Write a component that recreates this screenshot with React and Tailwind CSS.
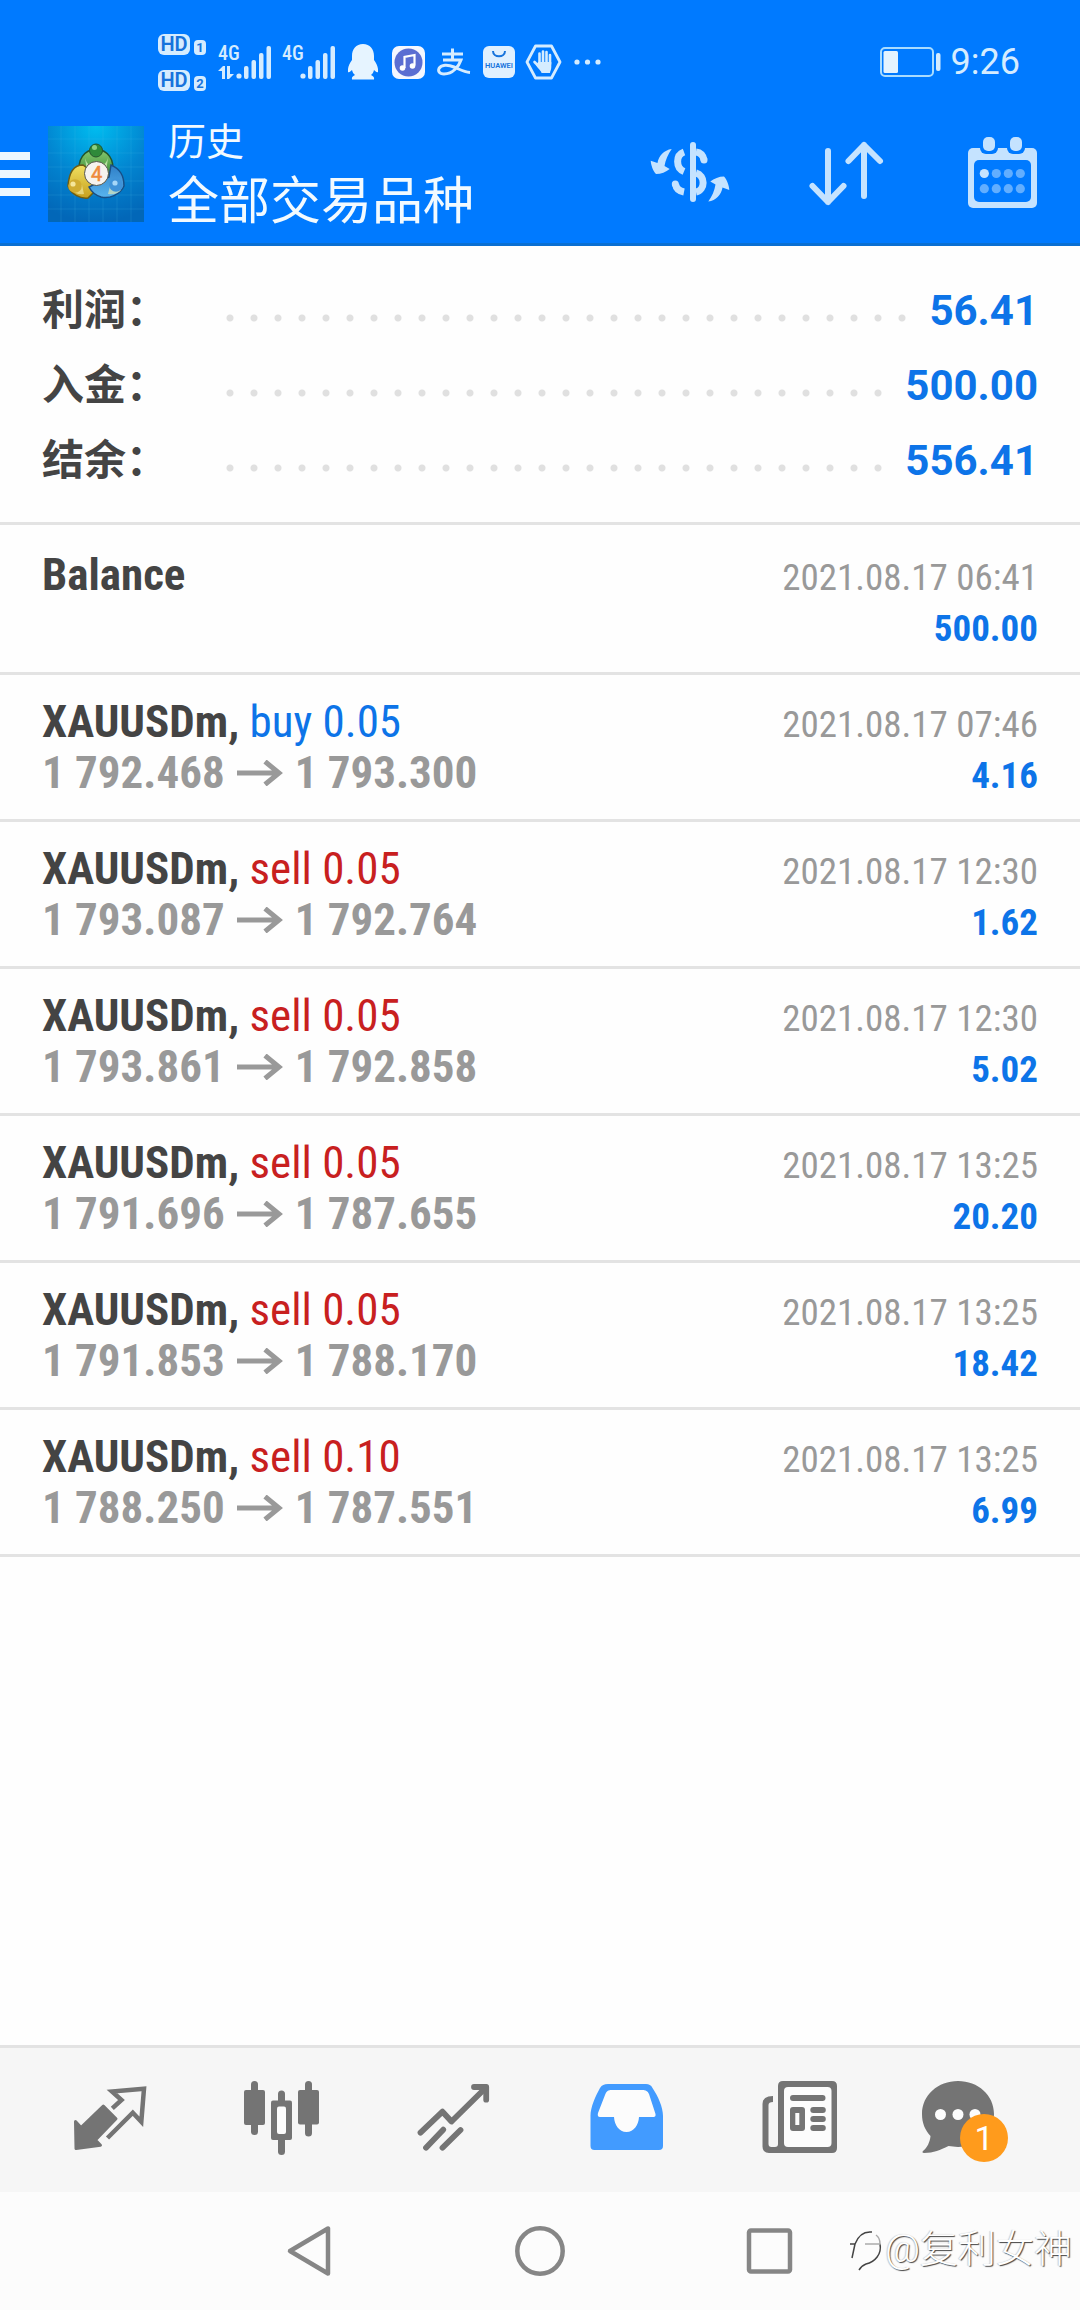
const summary = [
  { label: '利润', value: '56.41' },
  { label: '入金', value: '500.00' },
  { label: '结余', value: '556.41' },
];

const deals = [
  { id: 1, symbol: 'XAUUSDm', side: 'buy', volume: '0.05', open: '1 792.468', close: '1 793.300', time: '2021.08.17 07:46', profit: '4.16' },
  { id: 2, symbol: 'XAUUSDm', side: 'sell', volume: '0.05', open: '1 793.087', close: '1 792.764', time: '2021.08.17 12:30', profit: '1.62' },
  { id: 3, symbol: 'XAUUSDm', side: 'sell', volume: '0.05', open: '1 793.861', close: '1 792.858', time: '2021.08.17 12:30', profit: '5.02' },
  { id: 4, symbol: 'XAUUSDm', side: 'sell', volume: '0.05', open: '1 791.696', close: '1 787.655', time: '2021.08.17 13:25', profit: '20.20' },
  { id: 5, symbol: 'XAUUSDm', side: 'sell', volume: '0.05', open: '1 791.853', close: '1 788.170', time: '2021.08.17 13:25', profit: '18.42' },
  { id: 6, symbol: 'XAUUSDm', side: 'sell', volume: '0.10', open: '1 788.250', close: '1 787.551', time: '2021.08.17 13:25', profit: '6.99' },
];

const sideStyles = {
  buy: 'text-[#0d74e8]',
  sell: 'text-[#c8201f]',
};

const HdBadge = ({ sim }) => (
  <div className="flex items-end gap-1">
    <span className="flex h-[21px] w-8 items-center justify-center rounded-md bg-[#d5ecff] text-[20px] leading-none font-semibold text-[#1673dc]">HD</span>
    <span className="flex h-[15px] w-3 items-center justify-center rounded-sm bg-[#d5ecff] text-[13px] leading-none font-bold text-[#1673dc]">{sim}</span>
  </div>
);

const Signal = ({ active }) => (
  <svg className="h-12 w-14 shrink-0" viewBox="0 -6 56 48" fill="#d5ecff">
    <text x="0" y="16" fontSize="20" fontWeight="500" fontFamily="'Roboto Condensed', 'Liberation Sans Narrow', sans-serif">4G</text>
    {active && <path d="M0 27l5-5h2v13H4v-8zM9 22h3v8h4l-5 5H9z" />}
    <circle cx="21" cy="32" r="2.6" />
    <rect x="26" y="22" width="4.5" height="13" rx="2" />
    <rect x="33.500" y="16" width="4.500" height="19" rx="2" />
    <rect x="41" y="9" width="4.500" height="26" rx="2" />
    <rect x="48.500" y="2" width="4.500" height="33" rx="2" />
  </svg>
);

const StatusBar = () => (
  <div className="flex h-[104px] items-center justify-between pt-5 pr-[60px] pl-[158px] text-[#d5ecff]">
    <div className="flex items-center">
      <div className="mr-3 flex flex-col gap-[15px]">
        <HdBadge sim="1" />
        <HdBadge sim="2" />
      </div>
      <Signal active />
      <span className="w-2" />
      <Signal />
      {/* QQ */}
      <svg className="ml-2.5 h-9 w-[30px]" viewBox="0 0 30 36" fill="#e6f4ff">
        <path d="M15 0C8 0 4 5 4 12v4C1 20-.5 24 0 28c1 1 2.500-.5 4-2 .5 2 1.500 4 3 5-2 1-3.500 2-3 4.500h22c.5-2.500-1-3.500-3-4.500 1.500-1 2.500-3 3-5 1.500 1.500 3 3 4 2 .5-4-1-8-4-12v-4C26 5 22 0 15 0z" />
      </svg>
      {/* Music */}
      <svg className="ml-3.5 h-[33px] w-[33px]" viewBox="0 0 33 33">
        <rect width="33" height="33" rx="7" fill="#f4f7ff" />
        <circle cx="16.500" cy="16.500" r="14" fill="#5b6ed2" />
        <path d="M12.500 22V11l10-2v10.500" fill="none" stroke="#fff" strokeWidth="2.200" />
        <circle cx="10.500" cy="22" r="2.800" fill="#fff" />
        <circle cx="20.500" cy="20" r="2.800" fill="#fff" />
      </svg>
      {/* Alipay */}
      <svg className="ml-3 h-8 w-[34px]" viewBox="0 0 34 32" fill="none" stroke="#d5ecff" strokeWidth="3">
        <path d="M5 8h21M15.500 2.500V14M6 14h18c-2 6-8 14-17 14-5 0-6-3-5-5.500 2-4 9-4 15-1.500 6 2.500 10 5 16 5.500" />
      </svg>
      {/* App store */}
      <svg className="ml-3 h-8 w-8" viewBox="0 0 32 32">
        <rect width="32" height="32" rx="6" fill="#dff0ff" />
        <path d="M10 5c0 7 12 7 12 0" fill="none" stroke="#1673dc" strokeWidth="2" />
        <text x="16" y="21.500" fontSize="7.500" fontWeight="600" textAnchor="middle" fill="#1673dc" fontFamily="Roboto, sans-serif">HUAWEI</text>
      </svg>
      {/* Blocker */}
      <svg className="ml-2.5 h-9 w-[37px]" viewBox="0 0 37 36">
        <path d="M10.500 2h16l8.500 16-8.500 16h-16L2 18z" fill="none" stroke="#d5ecff" strokeWidth="2.800" strokeLinejoin="round" />
        <g stroke="#d5ecff" strokeWidth="2.600" strokeLinecap="round">
          <path d="M14.500 20V9.500M18 20V7.500M21.500 20V8M25 20v-9M9.500 18l5 5" />
        </g>
        <path d="M13.200 18h13.100v5c0 3-1.300 4-1.300 6h-8.500c0-2-3.300-4-5.500-8z" fill="#d5ecff" />
      </svg>
      <svg className="ml-3 h-2 w-[27px]" viewBox="0 0 27 8" fill="#d5ecff">
        <circle cx="3" cy="4" r="2.600" />
        <circle cx="13.500" cy="4" r="2.600" />
        <circle cx="24" cy="4" r="2.600" />
      </svg>
    </div>
    <div className="flex items-center gap-2.5">
      <svg className="h-[30px] w-[61px]" viewBox="0 0 61 30">
        <rect x="1" y="1" width="52" height="28" rx="4" fill="none" stroke="#a9dcff" strokeWidth="2" />
        <rect x="3.500" y="4" width="14.500" height="22" rx="1.500" fill="#e3f3ff" />
        <rect x="56" y="6" width="4.500" height="18" rx="2" fill="#d5ecff" />
      </svg>
      <span className="text-[36px] leading-none">9:26</span>
    </div>
  </div>
);

const AppLogo = () => (
  <svg className="h-24 w-24" viewBox="0 0 96 96">
    <defs>
      <radialGradient id="logoBg" cx="0.5" cy="0" r="1">
        <stop offset="0" stopColor="#00bdf0" />
        <stop offset="0.55" stopColor="#0284d0" />
        <stop offset="1" stopColor="#0267b8" />
      </radialGradient>
      <linearGradient id="logoGreen" x1="0" y1="0" x2="0" y2="1">
        <stop offset="0" stopColor="#8bc96f" />
        <stop offset="1" stopColor="#2f8a35" />
      </linearGradient>
      <linearGradient id="logoYellow" x1="0" y1="0" x2="0" y2="1">
        <stop offset="0" stopColor="#f0e060" />
        <stop offset="1" stopColor="#c7a01e" />
      </linearGradient>
      <linearGradient id="logoBlue" x1="0" y1="0" x2="0" y2="1">
        <stop offset="0" stopColor="#2f7fc8" />
        <stop offset="1" stopColor="#58b4ee" />
      </linearGradient>
    </defs>
    <rect width="96" height="96" fill="url(#logoBg)" />
    <path d="M13 0v96M27 0v96M41 0v96M55 0v96M69 0v96M83 0v96M0 13h96M0 27h96M0 41h96M0 55h96M0 69h96M0 83h96" stroke="#4fc0ee" strokeOpacity="0.18" />
    <path d="M32 46c-3-12 4-22 16-23 12 1 19 11 16 23l-7 6H38z" fill="url(#logoGreen)" stroke="#24552c" strokeWidth="1.500" />
    <path d="M35 39c-9 0-14 7-15 21 3 8 12 13 20 12l9-9-6-18z" fill="url(#logoYellow)" stroke="#6d5d14" strokeWidth="1.500" />
    <path d="M63 39c9 4 13 10 13 21-4 9-15 13-23 11-6-2-10-6-12-10l20-10z" fill="url(#logoBlue)" stroke="#174e86" strokeWidth="1.500" />
    <path d="M37 32c2 6 4 8 10 7l-8 7zM60 32c-2 6-5 8-10 7l8 7z" fill="#b6dfa0" />
    <path d="M36 68c-5 1-10-1-12-4l10-5zM60 68c6 1 11-1 13-4l-11-4z" fill="#f3f0b0" fillOpacity="0.6" />
    <circle cx="48" cy="24.500" r="6.500" fill="#2f8a3a" stroke="#24552c" />
    <circle cx="46.500" cy="21.500" r="2.500" fill="#8ccf82" />
    <circle cx="27" cy="60" r="6.800" fill="#d0ac30" />
    <circle cx="25" cy="58" r="2.600" fill="#f5e69a" />
    <circle cx="68" cy="59" r="6.800" fill="#3f92d8" />
    <circle cx="67" cy="57" r="2.600" fill="#a5d6f8" />
    <circle cx="48.500" cy="47.500" r="12" fill="#f5f3ee" stroke="#55564a" />
    <text x="48.500" y="54.500" fontSize="20" textAnchor="middle" fill="#ee8a3c" stroke="#ee8a3c" strokeWidth="0.5" fontFamily="Roboto, sans-serif">4</text>
  </svg>
);

const CurrencyIcon = () => (
  <svg className="h-[84px] w-[84px]" viewBox="0 0 84 84" fill="none" stroke="#c5e3ff" strokeWidth="7">
    <path d="M45 13v54" strokeWidth="6" strokeLinecap="round" />
    <path d="M36 20c-8.500 3-8.500 16 0 19.500M36 60c-5-1-8-4-8.500-8" />
    <circle cx="27.300" cy="52" r="3.500" fill="#c5e3ff" stroke="none" />
    <path d="M48 20c4 .5 7 3 8 8M48 41c9.500 2.500 9.500 17 0 19" />
    <circle cx="56" cy="28" r="3.500" fill="#c5e3ff" stroke="none" />
    <g fill="#c5e3ff" stroke="none">
      <path id="turn" d="M23.700 17C16 18 10.500 24 9.500 31l-6.800-2.300C3 33 5 39 8 42c5 0 10-2 13.700-5l-5.200-3c1-6 3.500-12 7.200-17z" />
      <use href="#turn" transform="rotate(180 42 43.3)" />
    </g>
  </svg>
);

const SortIcon = () => (
  <svg className="h-[84px] w-[84px]" viewBox="0 0 84 84" fill="none" stroke="#c5e3ff" strokeWidth="6" strokeLinecap="round" strokeLinejoin="round">
    <path d="M24 19v51M8.500 54L24 70l15.500-16" />
    <path d="M60 64V13M44.500 29L60 13l16 16" />
  </svg>
);

const CalendarIcon = () => (
  <svg className="h-[84px] w-[84px]" viewBox="0 0 84 84" fill="#c5e3ff">
    <rect x="8" y="16" width="69" height="60" rx="5" />
    <rect x="14" y="28" width="57" height="42" rx="5" fill="#007aff" />
    <rect x="20" y="2" width="18" height="20" rx="6" fill="#007aff" />
    <rect x="47" y="2" width="18" height="20" rx="6" fill="#007aff" />
    <rect x="23" y="5" width="12" height="14" rx="5" />
    <rect x="50" y="5" width="12" height="14" rx="5" />
    <circle cx="24.300" cy="41.500" r="4.600" />
    <g fill="#62aeff">
      <circle cx="36.300" cy="41.500" r="4.600" />
      <circle cx="48.300" cy="41.500" r="4.600" />
      <circle cx="60.300" cy="41.500" r="4.600" />
      <circle cx="24.300" cy="56.700" r="4.600" />
      <circle cx="36.300" cy="56.700" r="4.600" />
      <circle cx="48.300" cy="56.700" r="4.600" />
      <circle cx="60.300" cy="56.700" r="4.600" />
    </g>
  </svg>
);

const actions = [
  { label: 'Symbols', icon: CurrencyIcon },
  { label: 'Sort', icon: SortIcon },
  { label: 'Period', icon: CalendarIcon },
];

const Header = () => (
  <header className="border-b-3 border-[#0a6fd2] bg-[#007aff]">
    <StatusBar />
    <div className="flex h-[139px] items-center justify-between">
      <div className="flex items-center">
        <button aria-label="Menu" className="flex w-[30px] flex-col gap-2.5">
          <span className="h-2 bg-[#ecf7ff]" />
          <span className="h-2 bg-[#ecf7ff]" />
          <span className="h-2 bg-[#ecf7ff]" />
        </button>
        <div className="ml-[18px]">
          <AppLogo />
        </div>
        <div className="ml-6 pt-1.5 text-[#f2faff]">
          <p className="text-[38px] leading-[50px]">历史</p>
          <h1 className="text-[51px] leading-[70px]">全部交易品种</h1>
        </div>
      </div>
      <div className="flex">
        {actions.map(({ label, icon: Icon }) => (
          <button key={label} aria-label={label} className="flex w-[156px] items-center justify-center">
            <Icon />
          </button>
        ))}
      </div>
    </div>
  </header>
);

const Summary = () => (
  <dl className="border-b-3 border-[#e3e3e3] px-[42px] pt-[27px] pb-6">
    {summary.map((item) => (
      <div key={item.label} className="flex h-[75px] items-center font-bold">
        <dt className="w-44 shrink-0 text-[42px] leading-none text-[#444]">{item.label}：</dt>
        <dd className="flex flex-1 items-center text-[42px] leading-none text-[#0d74e8]">
          <span className="mt-3.5 h-2 flex-1 bg-[radial-gradient(circle,#e0e0e0_3px,transparent_4px)] bg-size-[24px_8px] bg-repeat-x" />
          <span className="ml-3.5">{item.value}</span>
        </dd>
      </div>
    ))}
  </dl>
);

const Arrow = () => (
  <svg className="h-[26px] w-[46px]" viewBox="0 0 46 26" fill="none" stroke="#999" strokeWidth="5">
    <path d="M0 13h42M28 1.500L42 13 28 24.500" />
  </svg>
);

const DealRow = ({ deal }) => (
  <li className="border-b-3 border-[#e3e3e3] px-[42px] py-[21px]">
    <div className="flex h-[51px] items-baseline justify-between leading-[51px]">
      <span className="text-[45px]">
        <b className="text-[#444]">{deal.symbol}, </b>
        <span className={sideStyles[deal.side]}>{deal.side} {deal.volume}</span>
      </span>
      <time className="text-[37px] text-[#999]">{deal.time}</time>
    </div>
    <div className="flex h-[51px] items-baseline justify-between leading-[51px] font-bold">
      <span className="flex items-center gap-3 text-[45px] text-[#999]">
        <span>{deal.open}</span>
        <Arrow />
        <span>{deal.close}</span>
      </span>
      <span className="text-[37px] text-[#0d74e8]">{deal.profit}</span>
    </div>
  </li>
);

const History = () => (
  <ul className="font-['Roboto_Condensed','Liberation_Sans_Narrow',sans-serif]">
    <li className="border-b-3 border-[#e3e3e3] px-[42px] pt-6 pb-[21px]">
      <div className="flex h-[51px] items-baseline justify-between leading-[51px]">
        <b className="text-[45px] text-[#444]">Balance</b>
        <time className="text-[37px] text-[#999]">2021.08.17 06:41</time>
      </div>
      <div className="h-[51px] text-right text-[45px] leading-[51px] font-bold">
        <span className="text-[37px] text-[#0d74e8]">500.00</span>
      </div>
    </li>
    {deals.map((deal) => (
      <DealRow key={deal.id} deal={deal} />
    ))}
  </ul>
);

const QuotesIcon = () => (
  <svg className="h-24 w-24" viewBox="0 0 96 96">
    <path d="M13.500 49.500l5.500 6L41.300 34 54 46.700 33.500 68l5 5.200L14 76.500z" fill="#747474" stroke="#747474" strokeWidth="3" strokeLinejoin="round" />
    <path d="M50.300 36.300l9.200-8.300L50 19.500l32-2.800-2.700 33-8.500-9L45.500 66" fill="none" stroke="#747474" strokeWidth="4.500" />
  </svg>
);

const ChartIcon = () => (
  <svg className="h-24 w-24" viewBox="0 0 96 96" fill="#747474">
    <rect x="10" y="18" width="21" height="35" rx="2" />
    <rect x="17" y="9" width="7" height="54" rx="3.500" />
    <rect x="37" y="28.500" width="21" height="39.500" rx="2" />
    <rect x="44" y="18.500" width="7" height="64.500" rx="3.500" />
    <rect x="43" y="34.500" width="9" height="27.500" rx="2" fill="#fcfcfc" />
    <rect x="64" y="18" width="21" height="34.500" rx="2" />
    <rect x="71" y="9" width="7" height="55.500" rx="3.500" />
  </svg>
);

const TradeIcon = () => (
  <svg className="h-24 w-24" viewBox="0 0 96 96" fill="none" stroke="#747474" strokeWidth="5.800" strokeLinecap="round" strokeLinejoin="round">
    <path d="M14.500 60.700l22-21 9 9.800L80 15.500" />
    <path d="M68 15h12.200v12.700M20 75.700l17.200-18M36.500 75.700L54.500 58" />
  </svg>
);

const HistoryIcon = () => (
  <svg className="h-24 w-24" viewBox="0 0 96 96">
    <path d="M30 12h38c3 0 5 1 6.500 4C80 24 85 35 85 44v30q0 4-4 4H16.500q-4 0-4-4V44c0-9 5-20 9.500-28 2-3 4-4 8-4z" fill="#429bff" />
    <path d="M34 18h30c4 0 5.500 1 7 4l6.500 20q.5 3-2 3H61c-.5 8-5 15-12.500 15S36.500 53 36 45H22q-3 0-2-4l7-18c1.500-4 3-5 7-5z" fill="#fcfcfc" />
  </svg>
);

const NewsIcon = () => (
  <svg className="h-24 w-24" viewBox="0 0 96 96" fill="#747474">
    <path fillRule="evenodd" d="M33 9h49q5 0 5 5v62q0 5-5 5H19q-6.500 0-6.500-6.500V32q0-8 10.500-8v6q-4.500 0-4.500 3v39q0 3 3 3H25q3 0 3-3V14q0-5 5-5z" />
    <rect x="34" y="15" width="47.500" height="60" rx="4" fill="#fcfcfc" />
    <rect x="40" y="23" width="35.500" height="6" rx="3" />
    <rect x="40" y="35" width="15" height="24" rx="3" />
    <rect x="45.300" y="41" width="4" height="12" fill="#fcfcfc" />
    <rect x="60.300" y="35" width="15.500" height="6" rx="3" />
    <rect x="60.300" y="44" width="15.500" height="6" rx="3" />
    <rect x="60.300" y="53" width="15.500" height="6" rx="3" />
  </svg>
);

const MessagesIcon = () => (
  <svg className="h-24 w-24" viewBox="0 0 96 96">
    <path d="M36 9c20 0 36 14 36 33S56 75 36 75c-4 0-6-1-9.500-1C18 78 12 81 2 81c-1.500 0-2-1-1-2 4-3 7-9 7.500-15C3 58 0 51 0 42 0 23 16 9 36 9z" fill="#747474" />
    <circle cx="18.500" cy="42.500" r="5.500" fill="#fcfcfc" />
    <circle cx="36" cy="42.500" r="5.500" fill="#fcfcfc" />
    <circle cx="53" cy="42.500" r="5.500" fill="#fcfcfc" />
  </svg>
);

const tabs = [
  { label: 'Quotes', icon: QuotesIcon },
  { label: 'Chart', icon: ChartIcon },
  { label: 'Trade', icon: TradeIcon },
  { label: 'History', icon: HistoryIcon },
  { label: 'News', icon: NewsIcon },
  { label: 'Messages', icon: MessagesIcon, badge: 1 },
];

const TabBar = () => (
  <nav className="flex border-t-3 border-[#e3e3e3] bg-[#f6f6f6] px-6 py-6">
    {tabs.map(({ label, icon: Icon, badge }) => (
      <button key={label} aria-label={label} className="flex flex-1 justify-center">
        <span className="relative">
          <Icon />
          {badge && (
            <span className="absolute right-2.5 bottom-1.5 flex h-12 w-12 items-center justify-center rounded-full bg-[#ff9b1c] text-[34px] leading-none text-white">
              {badge}
            </span>
          )}
        </span>
      </button>
    ))}
  </nav>
);

const Watermark = () => (
  <div className="absolute right-2 bottom-9 flex items-center text-[38px] leading-[50px] font-light text-white [text-shadow:1px_1px_1px_#444,-1px_0_1px_#ccc]">
    <svg className="h-11 w-9" viewBox="0 0 36 44" fill="none" stroke="#444" strokeWidth="1.500">
      <path d="M1 17h5c3-8 8-13 17-12M6 17L3 31M31 17c2 10-5 18-14 20-3 1-5 3-7 6" />
      <path d="M16 17h15c0-4-1-7-4-9" stroke="#aaa" />
    </svg>
    <span>@复利女神</span>
  </div>
);

const SystemNav = () => (
  <div className="relative flex h-[118px] items-center justify-center bg-[#fcfcfc]">
    <button aria-label="Back" className="flex w-[230px] justify-center">
      <svg className="h-[54px] w-[54px]" viewBox="0 0 54 54" fill="none" stroke="#868686" strokeWidth="4.500" strokeLinejoin="round">
        <path d="M45 4.500v45L7 27z" />
      </svg>
    </button>
    <button aria-label="Home" className="flex w-[230px] justify-center">
      <svg className="h-[54px] w-[54px]" viewBox="0 0 54 54" fill="none" stroke="#868686" strokeWidth="4.500">
        <circle cx="27" cy="27" r="22.700" />
      </svg>
    </button>
    <button aria-label="Recent apps" className="flex w-[230px] justify-center">
      <svg className="h-[54px] w-[54px]" viewBox="0 0 54 54" fill="none" stroke="#868686" strokeWidth="4.500">
        <rect x="6" y="6.500" width="41" height="41" rx="2" />
      </svg>
    </button>
    <Watermark />
  </div>
);

const App = () => (
  <div className="flex min-h-screen flex-col bg-[#fefefe] font-[Roboto,'Noto_Sans_CJK_SC',sans-serif]">
    <Header />
    <main className="flex-1">
      <Summary />
      <History />
    </main>
    <TabBar />
    <SystemNav />
  </div>
);

export default App;
